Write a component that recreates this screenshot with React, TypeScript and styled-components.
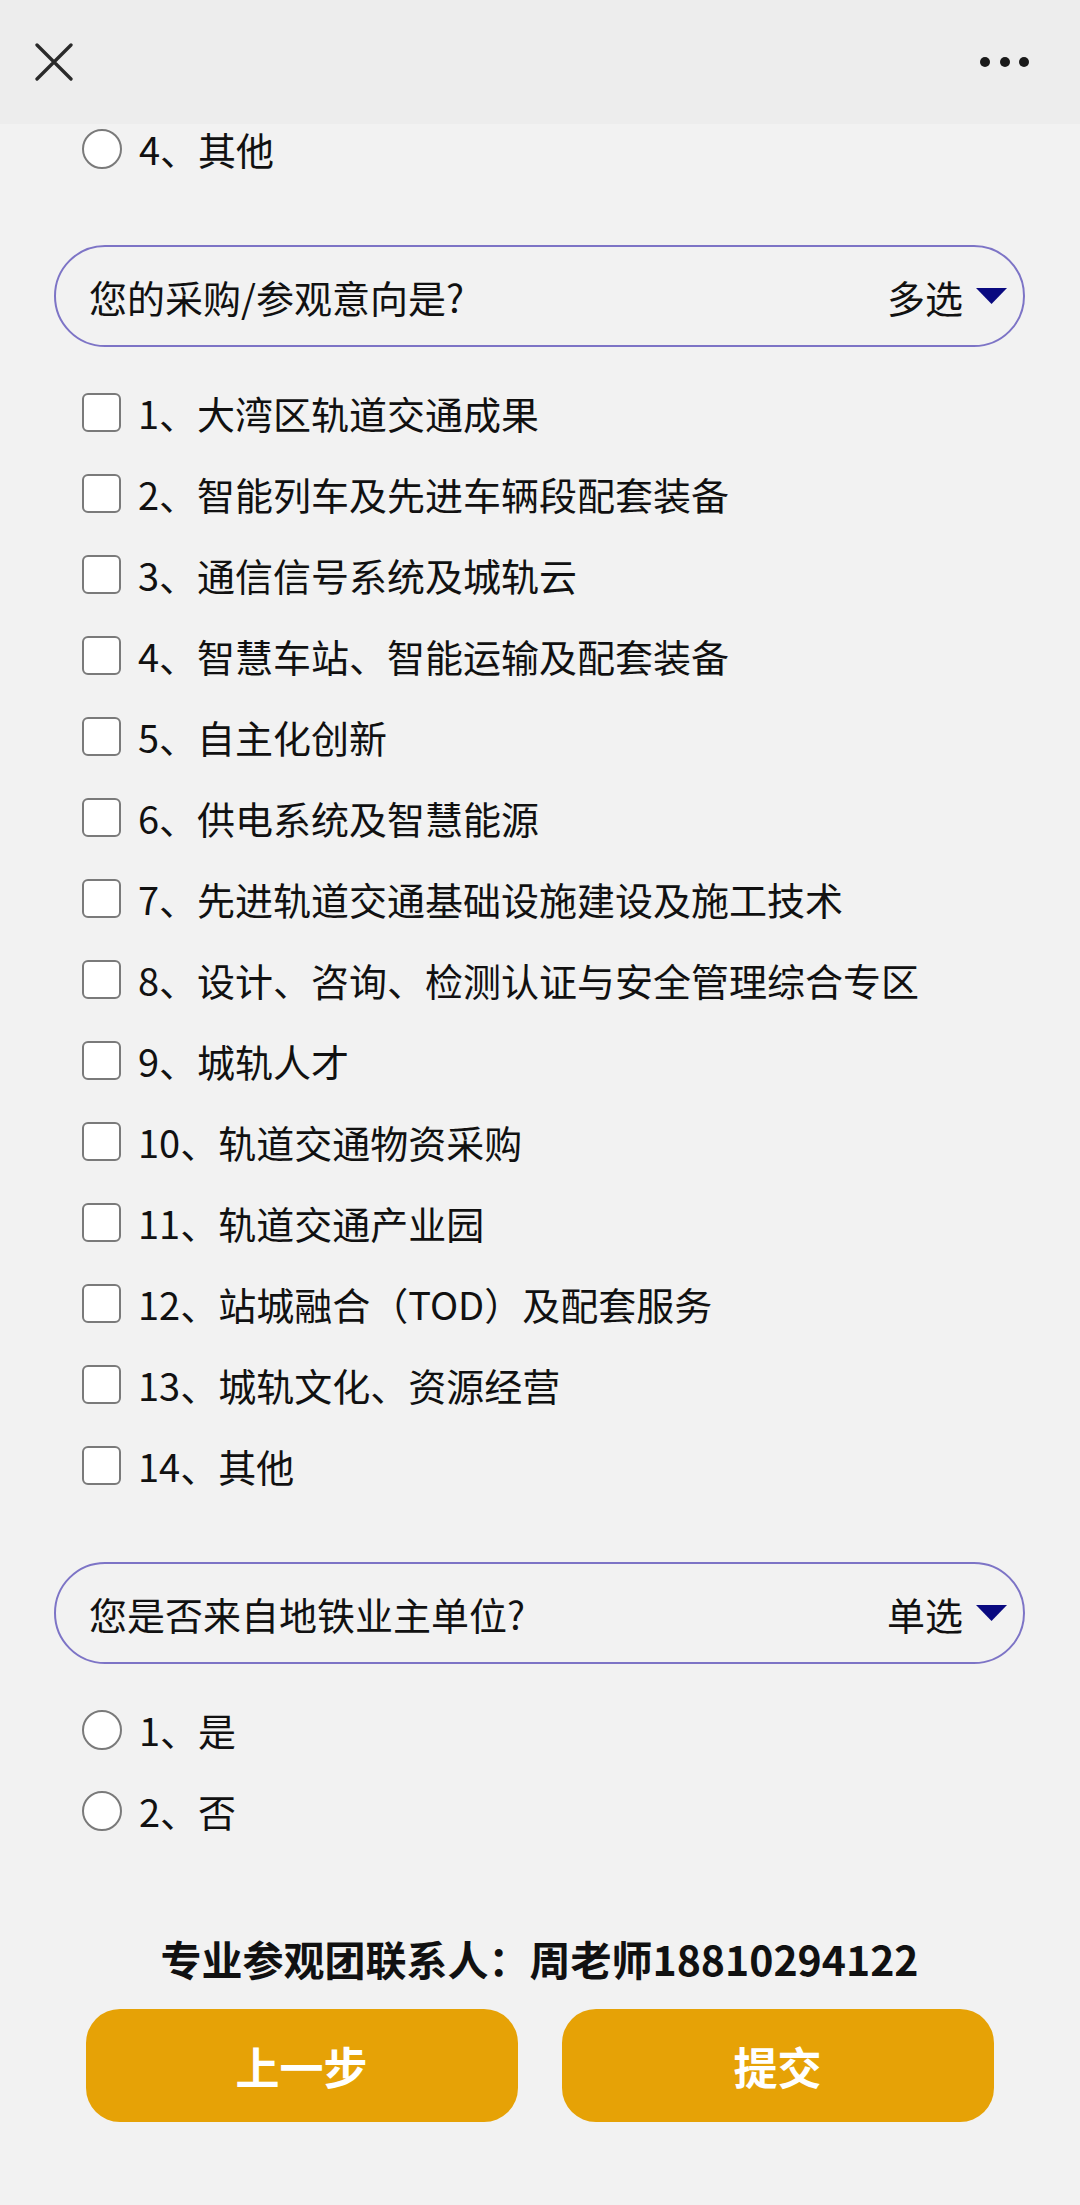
import React from "react";
import styled, { createGlobalStyle } from "styled-components";

const GlobalStyle = createGlobalStyle`
  html, body {
    margin: 0;
    padding: 0;
    background: #f2f2f2;
  }
  body {
    font-family: "Noto Sans CJK SC", "Noto Sans", sans-serif;
    color: #111;
  }
`;

const Page = styled.div`
  width: 1080px;
  height: 2205px;
  display: flex;
  flex-direction: column;
  background: #f2f2f2;
  overflow: hidden;
`;

const TopBar = styled.header`
  height: 124px;
  flex-shrink: 0;
  background: #ededed;
  display: flex;
  align-items: center;
  justify-content: space-between;
  padding: 0 51px 0 35px;
  box-sizing: border-box;
  position: relative;
  z-index: 1;
`;

const IconButton = styled.button`
  border: 0;
  background: none;
  padding: 0;
  display: flex;
  align-items: center;
  justify-content: center;
  color: #222;
`;

const Dots = styled.div`
  display: flex;
  gap: 9.5px;
  span {
    width: 10px;
    height: 10px;
    border-radius: 50%;
    background: #1a1a1a;
  }
`;

const Content = styled.main`
  flex: 1;
  display: flex;
  flex-direction: column;
  padding: 0 55px 0 54px;
`;

const TopOptions = styled.div`
  margin-top: -16px;
`;

const Section = styled.section`
  margin-top: 56px;
`;

const QuestionPill = styled.div`
  height: 102px;
  box-sizing: border-box;
  border: 2px solid #7d74c6;
  border-radius: 51px;
  display: flex;
  align-items: center;
  justify-content: space-between;
  padding: 0 16px 0 33px;
  font-size: 38px;
  margin-bottom: 25px;
`;

const PillTag = styled.div`
  display: flex;
  align-items: center;
  gap: 13px;
`;

const OptionList = styled.ul`
  list-style: none;
  margin: 0;
  padding: 0;
`;

const OptionRow = styled.li`
  height: 81px;
  display: flex;
  align-items: center;
  gap: 17px;
  padding-left: 28px;
  font-size: 38px;
  line-height: 1;
  white-space: nowrap;
`;

const Mark = styled.span<{ $round?: boolean }>`
  width: ${(p) => (p.$round ? "40px" : "39px")};
  height: ${(p) => (p.$round ? "40px" : "39px")};
  box-sizing: border-box;
  border: 2.5px solid #7a7a7a;
  border-radius: ${(p) => (p.$round ? "50%" : "6px")};
  background: #fff;
  flex-shrink: 0;
`;

const Footer = styled.footer`
  margin-top: 82px;
  display: flex;
  flex-direction: column;
  align-items: center;
`;

const Contact = styled.div`
  font-size: 41px;
  font-weight: 700;
  line-height: 50px;
  color: #111;
`;

const ButtonRow = styled.div`
  margin-top: 26px;
  display: flex;
  gap: 44px;
`;

const ActionButton = styled.button`
  width: 432px;
  height: 113px;
  border: 0;
  border-radius: 34px;
  background: #e6a206;
  color: #fff;
  font-family: "Noto Sans CJK SC", sans-serif;
  font-size: 44px;
  font-weight: 700;
`;

const purposeOptions = [
  "1、大湾区轨道交通成果",
  "2、智能列车及先进车辆段配套装备",
  "3、通信信号系统及城轨云",
  "4、智慧车站、智能运输及配套装备",
  "5、自主化创新",
  "6、供电系统及智慧能源",
  "7、先进轨道交通基础设施建设及施工技术",
  "8、设计、咨询、检测认证与安全管理综合专区",
  "9、城轨人才",
  "10、轨道交通物资采购",
  "11、轨道交通产业园",
  "12、站城融合（TOD）及配套服务",
  "13、城轨文化、资源经营",
  "14、其他",
];

const Caret = () => (
  <svg width="31" height="16" viewBox="0 0 31 16">
    <polygon points="0,0 31,0 15.5,16" fill="#0a0a80" />
  </svg>
);

const Question: React.FC<{ title: string; tag: string }> = ({ title, tag }) => (
  <QuestionPill>
    <span>{title}</span>
    <PillTag>
      <span>{tag}</span>
      <Caret />
    </PillTag>
  </QuestionPill>
);

const Option: React.FC<{ text: string; round?: boolean }> = ({ text, round }) => (
  <OptionRow>
    <Mark $round={round} />
    <span>{text}</span>
  </OptionRow>
);

export default function App() {
  return (
    <Page>
      <GlobalStyle />
      <TopBar>
        <IconButton>
          <svg width="38" height="38" viewBox="0 0 38 38">
            <path d="M2 2 L36 36 M36 2 L2 36" stroke="#2a2a2a" strokeWidth="3.3" strokeLinecap="round" />
          </svg>
        </IconButton>
        <Dots>
          <span />
          <span />
          <span />
        </Dots>
      </TopBar>
      <Content>
        <TopOptions>
          <OptionList>
            <Option text="4、其他" round />
          </OptionList>
        </TopOptions>

        <Section>
          <Question title="您的采购/参观意向是?" tag="多选" />
          <OptionList>
            {purposeOptions.map((t) => (
              <Option key={t} text={t} />
            ))}
          </OptionList>
        </Section>

        <Section>
          <Question title="您是否来自地铁业主单位?" tag="单选" />
          <OptionList>
            <Option text="1、是" round />
            <Option text="2、否" round />
          </OptionList>
        </Section>

        <Footer>
          <Contact>专业参观团联系人：周老师18810294122</Contact>
          <ButtonRow>
            <ActionButton>上一步</ActionButton>
            <ActionButton>提交</ActionButton>
          </ButtonRow>
        </Footer>
      </Content>
    </Page>
  );
}
